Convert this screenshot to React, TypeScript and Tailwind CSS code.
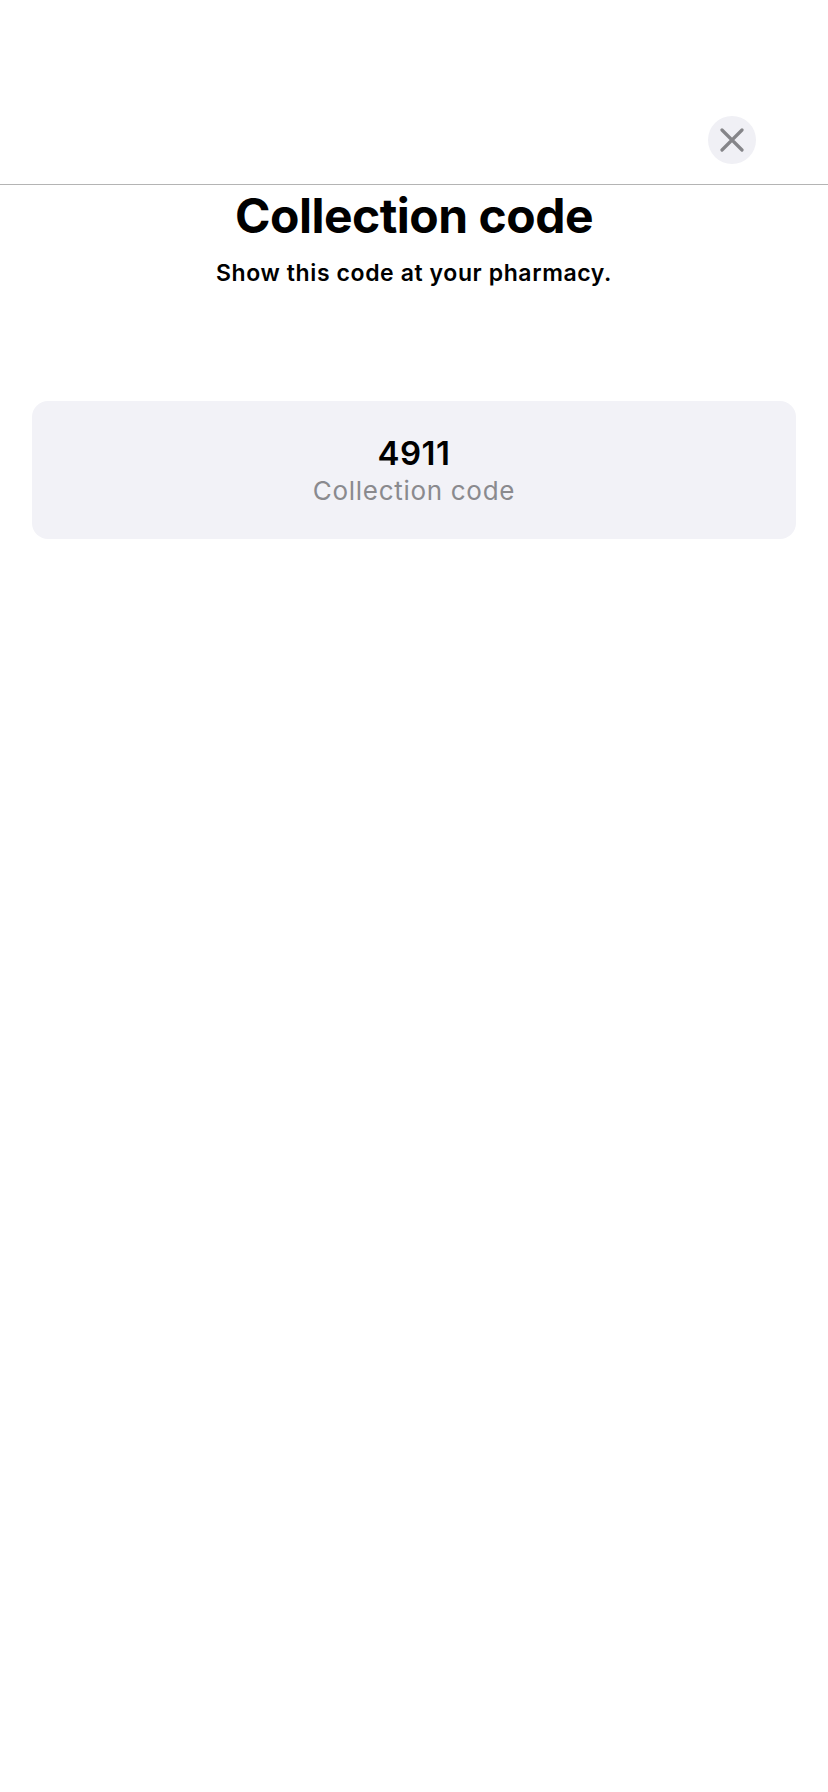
export default function App() {
  return (
    <div className="min-h-screen bg-white font-['Inter','Liberation_Sans',sans-serif] text-black">
      <header className="flex h-[185px] items-end justify-end border-b border-[#b4b4b4] pb-[20px] pr-[72px]">
        <button className="flex h-12 w-12 items-center justify-center rounded-full bg-[#f0f0f5]">
          <svg width="24" height="24" viewBox="0 0 24 24" fill="none">
            <path d="M2 2L22 22M22 2L2 22" stroke="#858589" strokeWidth="3.2" strokeLinecap="round" />
          </svg>
        </button>
      </header>

      <section className="flex flex-col items-center">
        <h1 className="mt-[2px] text-[48px] font-bold leading-[58px] tracking-[-0.5px]">Collection code</h1>
        <p className="mt-[14px] text-[23px] font-semibold leading-[28px] tracking-[0.6px]">Show this code at your pharmacy.</p>
      </section>

      <div className="px-8 pt-[114px]">
        <div className="flex h-[138px] flex-col items-center justify-center rounded-2xl bg-[#f2f2f7]">
          <span className="text-[33px] font-semibold leading-[38px] tracking-[0.5px]">4911</span>
          <span className="mt-[3px] text-[26px] leading-[32px] tracking-[0.7px] text-[#8a8a8e]">Collection code</span>
        </div>
      </div>
    </div>
  );
}
